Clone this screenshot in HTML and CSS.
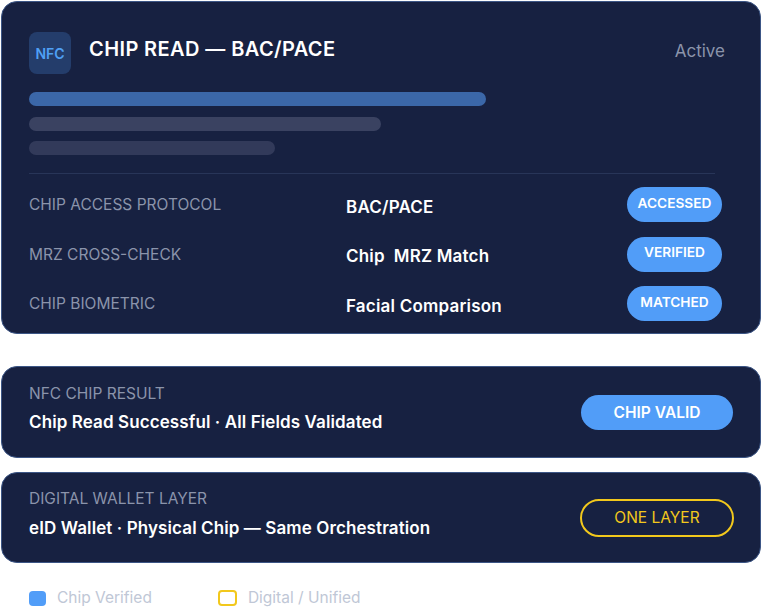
FILE: index.html
```html
<!DOCTYPE html>
<html>
<head>
<meta charset="utf-8">
<link rel="stylesheet" href="styles.css">
</head>
<body>
<div class="wrap">
  <section class="card main">
    <div class="header">
      <div class="nfc">NFC</div>
      <h1 class="title">CHIP READ — BAC/PACE</h1>
      <span class="status">Active</span>
    </div>
    <div class="bars">
      <div class="bar bar-a"></div>
      <div class="bar bar-b"></div>
      <div class="bar bar-c"></div>
    </div>
    <div class="divider"></div>
    <div class="rows">
      <div class="row">
        <span class="label">CHIP ACCESS PROTOCOL</span>
        <span class="value">BAC/PACE</span>
        <span class="badge">ACCESSED</span>
      </div>
      <div class="row">
        <span class="label">MRZ CROSS-CHECK</span>
        <span class="value">Chip &nbsp;MRZ Match</span>
        <span class="badge">VERIFIED</span>
      </div>
      <div class="row">
        <span class="label">CHIP BIOMETRIC</span>
        <span class="value">Facial Comparison</span>
        <span class="badge">MATCHED</span>
      </div>
    </div>
  </section>

  <section class="card result">
    <div class="result-text">
      <div class="label">NFC CHIP RESULT</div>
      <div class="result-value">Chip Read Successful · All Fields Validated</div>
    </div>
    <span class="pill pill-blue">CHIP VALID</span>
  </section>

  <section class="card result wallet">
    <div class="result-text">
      <div class="label">DIGITAL WALLET LAYER</div>
      <div class="result-value">eID Wallet · Physical Chip — Same Orchestration</div>
    </div>
    <span class="pill pill-yellow">ONE LAYER</span>
  </section>

  <div class="legend">
    <div class="legend-item"><span class="swatch swatch-blue"></span><span>Chip Verified</span></div>
    <div class="legend-item"><span class="swatch swatch-yellow"></span><span>Digital / Unified</span></div>
  </div>
</div>
</body>
</html>
```

FILE: styles.css
```css
* { box-sizing: border-box; }
html, body { margin: 0; padding: 0; background: #ffffff; }
body {
  font-family: Inter, "Noto Sans", "Liberation Sans", sans-serif;
  width: 762px;
  height: 608px;
  overflow: hidden;
}
.wrap {
  padding: 1px 1px 0 1px;
  display: flex;
  flex-direction: column;
}
.card {
  background: #172141;
  border: 1px solid #3c5686;
  border-radius: 16px;
}
.main {
  height: 333px;
  padding: 30px 36px 0 27px;
}
.header {
  display: flex;
  align-items: center;
  height: 42px;
}
.nfc {
  width: 42px;
  height: 42px;
  border-radius: 8px;
  background: #243d6b;
  color: #4fa0f5;
  font-size: 14px;
  font-weight: 600;
  display: flex;
  align-items: center;
  justify-content: center;
}
.title {
  margin: 0 0 0 18px;
  font-size: 20px;
  font-weight: 600;
  letter-spacing: 0.4px;
  color: #ffffff;
  flex: 1;
  position: relative;
  top: -4px;
}
.status {
  color: #8b94ab;
  font-size: 17px;
  margin-right: -1px;
  position: relative;
  top: -2px;
}
.bars {
  margin-top: 18px;
  display: flex;
  flex-direction: column;
  gap: 10.5px;
}
.bar { height: 14px; border-radius: 7px; }
.bar-a { width: 457px; background: #3b67a8; }
.bar-b { width: 352px; background: #3a4261; }
.bar-c { width: 246px; background: #323a5a; }
.divider {
  margin-top: 18px;
  height: 1px;
  width: 686px;
  background: #283558;
}
.rows {
  margin-top: 6px;
  margin-right: 2px;
}
.row {
  display: grid;
  grid-template-columns: 317px 1fr auto;
  align-items: center;
  height: 49.5px;
}
.label {
  color: #8b94ab;
  font-size: 15.5px;
}
.value {
  color: #ffffff;
  font-size: 17px;
  font-weight: 600;
  letter-spacing: 0.2px;
  position: relative;
  top: 2px;
}
.badge {
  width: 95px;
  height: 35px;
  border-radius: 18px;
  background: #519df8;
  color: #ffffff;
  font-size: 13.7px;
  font-weight: 600;
  display: flex;
  align-items: center;
  justify-content: center;
  padding-bottom: 4px;
}
.result {
  margin-top: 32px;
  height: 92px;
  padding: 0 27px;
  display: flex;
  align-items: center;
  justify-content: space-between;
}
.wallet { margin-top: 14px; height: 91px; }
.result-text {
  align-self: flex-start;
  padding-top: 17px;
  display: flex;
  flex-direction: column;
  gap: 9px;
}
.wallet .result-text { padding-top: 16px; gap: 10px; }
.result-value {
  color: #ffffff;
  font-size: 17px;
  font-weight: 600;
  letter-spacing: 0.1px;
}
.pill {
  display: flex;
  align-items: center;
  justify-content: center;
  border-radius: 20px;
  font-size: 15.5px;
}
.pill-blue {
  width: 152px;
  height: 35px;
  background: #519df8;
  color: #ffffff;
  font-weight: 600;
  margin-top: 1px;
}
.pill-yellow {
  width: 154px;
  height: 38px;
  border: 2.5px solid #f2c81c;
  color: #f2c81c;
  font-weight: 400;
  margin-right: -1px;
}
.legend {
  display: flex;
  margin-top: 26px;
  padding-left: 28px;
  gap: 66px;
}
.legend-item {
  display: flex;
  align-items: center;
  gap: 11px;
  color: #c0c7d6;
  font-size: 15.5px;
  line-height: 18px;
}
.swatch {
  width: 17px;
  height: 15px;
  border-radius: 4px;
  display: inline-block;
}
.swatch-blue { background: #519df8; }
.swatch-yellow { width: 19px; height: 16px; border: 2px solid #f2c81c; }
```
